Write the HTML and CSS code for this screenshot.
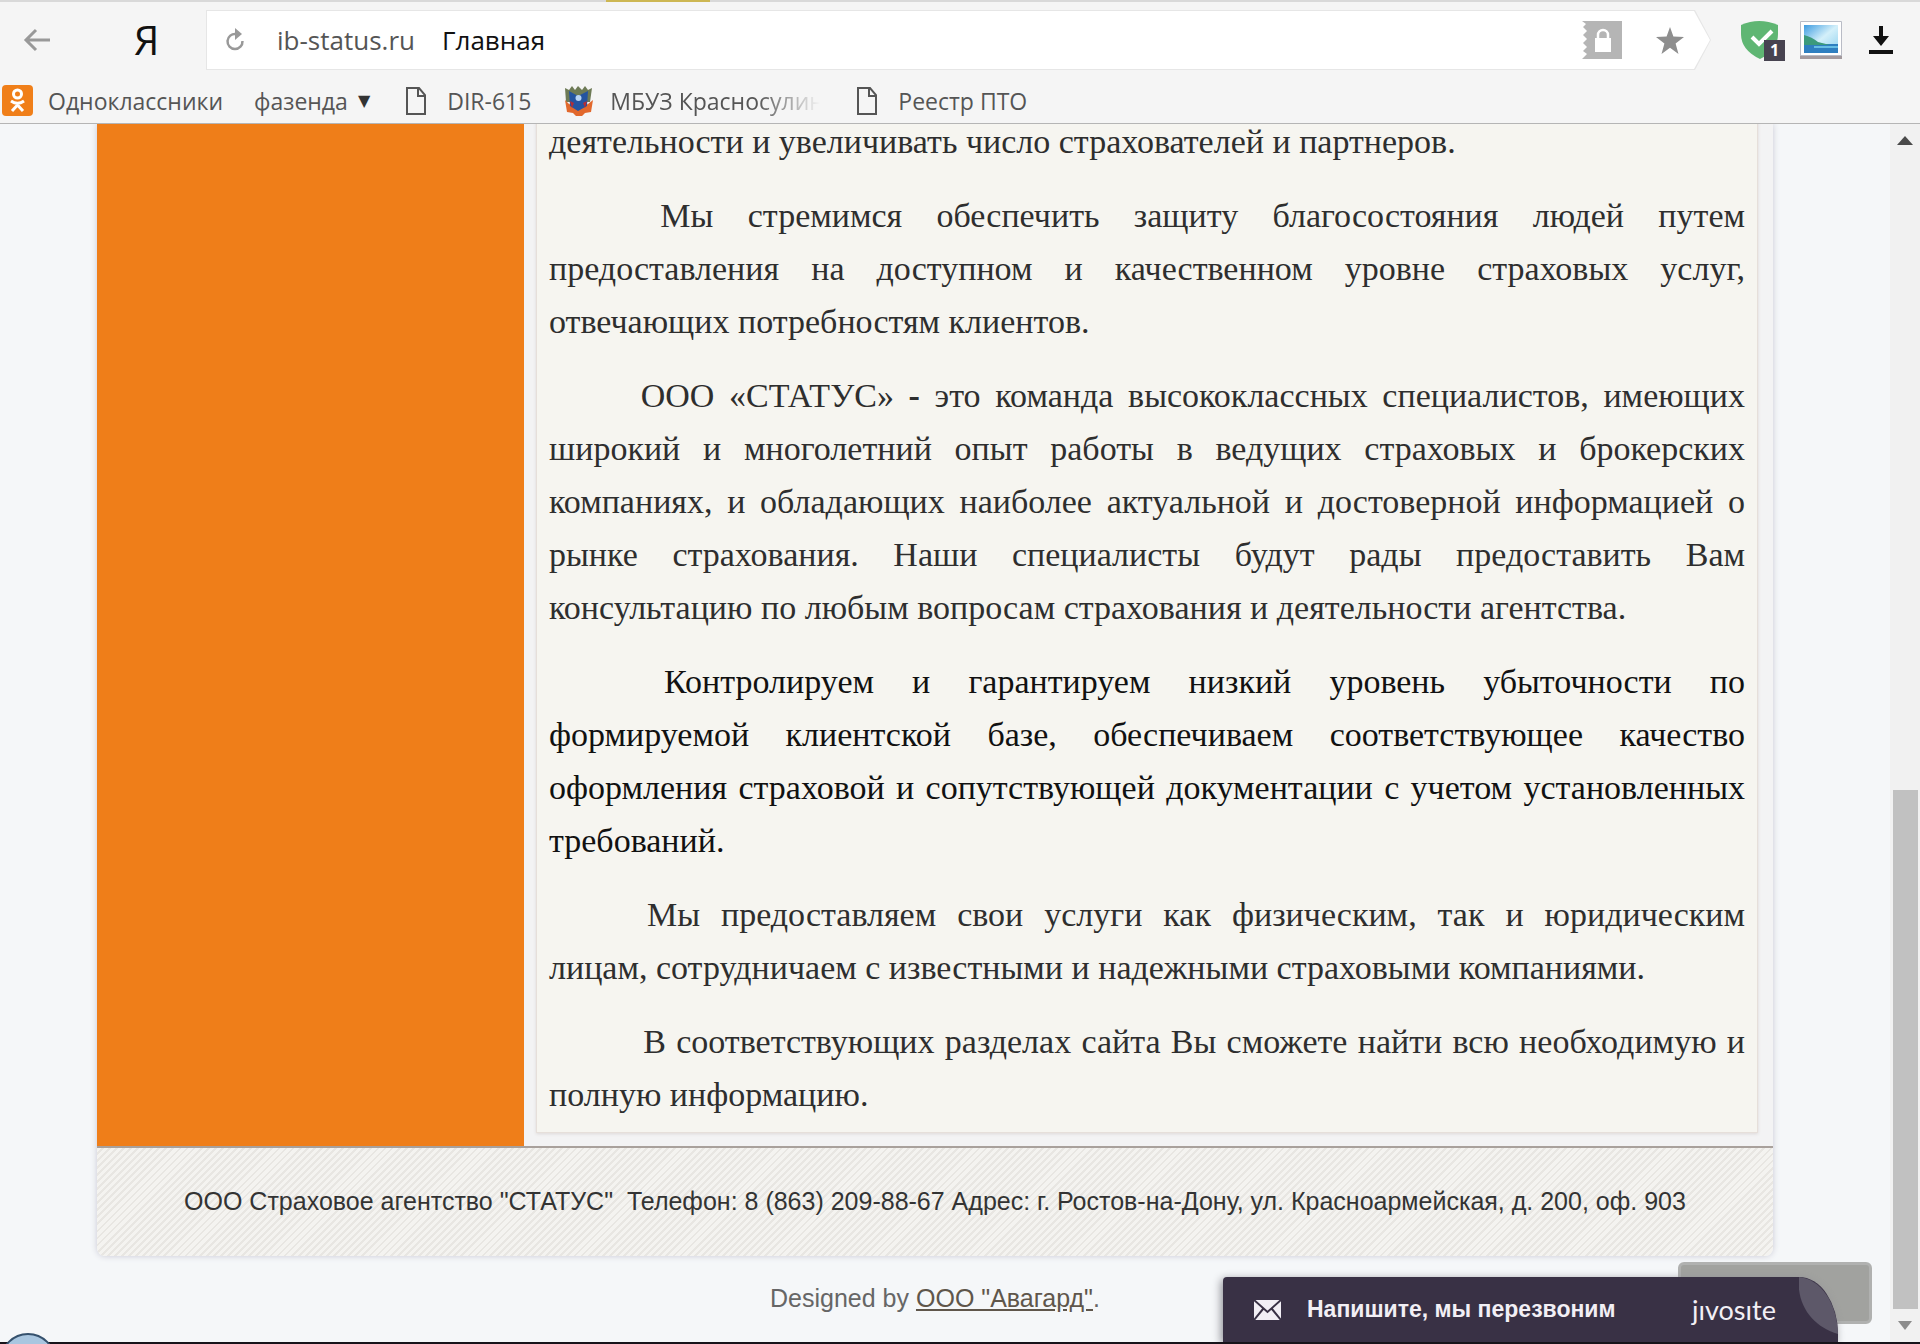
FILE: index.html
```html
<!DOCTYPE html>
<html lang="ru">
<head>
<meta charset="utf-8">
<title>Главная</title>
<link rel="stylesheet" href="styles.css">
</head>
<body>
<div class="browser">
  <header class="chrome">
    <div class="tabs"><span class="tab-active"></span></div>
    <div class="toolbar">
      <button class="tool back" aria-label="Назад">
        <svg width="28" height="24" viewBox="0 0 28 24" fill="none" stroke="#999" stroke-width="3"><path d="M27 12H3M13 2L3 12l10 10"/></svg>
      </button>
      <button class="tool yandex" aria-label="Яндекс">Я</button>
      <div class="address-edge">
        <form class="address">
          <button class="tool reload" type="button" aria-label="Обновить">
            <svg width="20" height="24" viewBox="0 0 20 24" fill="none" stroke="#999" stroke-width="2.5"><path d="M11 6A7.500 7.500 0 1 0 17.500 13"/><path d="M10 0l7 6-7 6z" fill="#999" stroke="none"/></svg>
          </button>
          <input class="url" type="text" value="ib-status.ru" aria-label="Адрес">
          <span class="page-title">Главная</span>
          <button class="tool lock" type="button" aria-label="Защита">
            <svg width="40" height="38" viewBox="0 0 40 38"><path fill="#b5b5b5" d="M0 0h40v38H0l5-5-4-3 4-4-4-4 4-4-4-4 4-4-4-4 3-3z"/><path fill="#fff" d="M13 17h16v14H13z"/><path fill="none" stroke="#fff" stroke-width="2.500" d="M16 18v-4a5 5 0 0 1 10 0v4"/></svg>
          </button>
          <button class="tool star" type="button" aria-label="В закладки">
            <svg width="28" height="27" viewBox="0 0 28 27"><path fill="#8e8e8e" d="M14 0l3.400 9.600L28 10l-8.400 6.400L22.500 27 14 20.800 5.500 27l2.900-10.600L0 10l10.600-.4z"/></svg>
          </button>
        </form>
      </div>
      <button class="tool shield" aria-label="Adguard">
        <svg width="38" height="39" viewBox="0 0 38 39"><path fill="#5fb673" d="M0 4Q18-4 37 4v9q0 16-18 25Q0 29 0 13z"/><path fill="none" stroke="#fff" stroke-width="4" d="M11 16l7 7L31 10"/></svg>
        <span class="badge">1</span>
      </button>
      <button class="tool picture" aria-label="Изображение">
        <svg width="42" height="38" viewBox="0 0 42 38">
          <defs><linearGradient id="sky" x1="0" y1="0" x2="1" y2="1"><stop offset="0" stop-color="#3d9be0"/><stop offset=".5" stop-color="#d4f0fa"/><stop offset="1" stop-color="#8fd0ee"/></linearGradient></defs>
          <path fill="#a39a9e" d="M0 33h42v5H0z"/><path fill="#fff" stroke="#b9bcc6" d="M.5.500h41v34H.5z"/><path fill="url(#sky)" d="M4 4h34v28H4z"/><path fill="#2f7fc0" d="M4 23h34v9H4z"/><path fill="#3c9a7c" d="M4 14q8 2 14 7l12 3H4z"/><path fill="#66bde4" d="M14 25h24v2H14z"/>
        </svg>
      </button>
      <button class="tool download" aria-label="Загрузки">
        <svg width="24" height="28" viewBox="0 0 24 28"><path d="M10 0h4v10h6l-8 10L4 10h6zM0 24h24v4H0z" fill="#111"/></svg>
      </button>
    </div>
    <nav class="bookmarks">
      <a class="bookmark bm-ok" href="#">
        <svg width="31" height="31" viewBox="0 0 31 31"><rect width="31" height="31" rx="4" fill="#f07f19"/><g fill="none" stroke="#fff" stroke-width="3"><circle cx="15.500" cy="9" r="4"/><path d="M9 16q6.500 4.500 13 0M10 26l5.500-6 5.500 6"/></g></svg>
        Одноклассники</a>
      <a class="bookmark bm-folder" href="#">фазенда <span class="caret">▼</span></a>
      <a class="bookmark bm-page" href="#">
        <svg width="20" height="28" viewBox="0 0 20 28" fill="none" stroke="#555" stroke-width="2"><path d="M1 1h12l6 7v19H1zM12 1v8h7"/></svg>
        DIR-615</a>
      <a class="bookmark bm-crest" href="#">
        <svg width="29" height="30" viewBox="0 0 29 30"><path fill="#6d7a55" d="M1 2l4 2 3-4 3 4 3-4 4 4 3-4 3 4 4-2-2 14H2z"/><path fill="#e2682c" d="M1 14l4 4 10 4 9-4 5-4-2 12-6 1-3 3h-6l-3-3-6-1z"/><path fill="#2454a0" d="M5 5l9 5 10-5-1 15-9 5-8-5z"/><circle cx="14.500" cy="12" r="3" fill="#b9d4f4"/><path fill="#b42d35" d="M6 15l4 2-2 5zM23 15l-4 2 2 5z"/></svg>
        <span class="fade">МБУЗ Красносулин</span></a>
      <a class="bookmark bm-page" href="#">
        <svg width="20" height="28" viewBox="0 0 20 28" fill="none" stroke="#555" stroke-width="2"><path d="M1 1h12l6 7v19H1zM12 1v8h7"/></svg>
        Реестр ПТО</a>
    </nav>
  </header>

  <div class="viewport">
    <div class="page">
      <div class="site">
        <div class="columns">
          <aside class="sidebar"></aside>
          <main class="content">
            <article class="article">
              <p class="continued">деятельности и увеличивать число страхователей и партнеров.</p>
              <p>&nbsp;Мы стремимся обеспечить защиту благосостояния людей путем предоставления на доступном и качественном уровне страховых услуг, отвечающих потребностям клиентов.</p>
              <p>&nbsp;ООО «СТАТУС» <b>-</b> это команда высококлассных специалистов, имеющих широкий и многолетний опыт работы в ведущих страховых и брокерских компаниях, и обладающих наиболее актуальной и достоверной информацией о рынке страхования. Наши специалисты будут рады предоставить Вам консультацию по любым вопросам страхования и деятельности агентства.</p>
              <p class="strong">&nbsp;Контролируем и гарантируем низкий уровень убыточности по формируемой клиентской базе, обеспечиваем соответствующее качество оформления страховой и сопутствующей документации с учетом установленных требований.</p>
              <p>&nbsp;Мы предоставляем свои услуги как физическим, так и юридическим лицам,&nbsp;сотрудничаем с известными и надежными страховыми компаниями.</p>
              <p class="closing">&nbsp;В соответствующих разделах сайта Вы сможете найти всю необходимую и полную информацию.</p>
            </article>
          </main>
        </div>
        <footer class="footer">ООО Страховое агентство "СТАТУС"&nbsp; Телефон: 8 (863) 209-88-67 Адрес: г. Ростов-на-Дону, ул. Красноармейская, д. 200, оф. 903</footer>
      </div>
      <p class="credit">Designed by <a href="#">ООО "Авагард"</a>.</p>
      <div class="to-top"></div>
      <button class="jivo">
        <svg width="27" height="20" viewBox="0 0 27 20"><path fill="#f2eff5" d="M0 0h27v20H0z"/><path fill="none" stroke="#393145" stroke-width="2" d="M0 0l13.500 12L27 0M0 20l9-11M27 20l-9-11"/></svg>
        <span class="jivo-label">Напишите, мы перезвоним</span>
        <span class="jivo-logo">jıvosıte</span>
        <svg class="jivo-leaf" width="39" height="57" viewBox="0 0 39 57"><path fill="#5d5869" d="M0 0C22 2 38 26 39 57C14 50-3 28 0 0z"/></svg>
      </button>
    </div>
    <div class="scrollbar">
      <svg class="up" width="16" height="9" viewBox="0 0 16 9"><path fill="#4a4a4a" d="M8 0l8 9H0z"/></svg>
      <div class="thumb"></div>
      <svg class="down" width="14" height="9" viewBox="0 0 14 9"><path fill="#8c8c8c" d="M0 0h14L7 9z"/></svg>
    </div>
  </div>
  <div class="taskbar"><span class="orb"></span></div>
</div>
</body>
</html>
```

FILE: styles.css
```css
* { box-sizing: border-box; }
body { margin: 0; font-family: "Liberation Sans", Arial, sans-serif; }
p { margin: 0; }
svg { display: block; flex: none; }
button { font: inherit; }

.browser { height: 100vh; display: flex; flex-direction: column; overflow: hidden; }

/* browser chrome */
.chrome { flex: none; height: 124px; background: #f5f5f5; border-bottom: 1px solid #b5b5b5; font-family: "Open Sans", "Noto Sans", sans-serif; }
.tabs { height: 2px; background: #d9d9d9; padding-left: 606px; }
.tab-active { display: block; width: 104px; height: 2px; background: #cdb753; }
.toolbar { height: 76px; display: flex; align-items: center; padding: 0 27px 0 23px; }
.tool { flex: none; display: block; padding: 0; border: 0; background: none; }
.yandex { width: 20px; margin: 0 52px 0 83px; font-family: "Open Sans", sans-serif; font-size: 40px; line-height: 56px; color: #111; }
.address-edge { flex: 1; height: 60px; padding: 1px; background: #e6e6e6; clip-path: polygon(0 0, calc(100% - 16px) 0, 100% 50%, calc(100% - 16px) 100%, 0 100%); }
.address { height: 58px; display: flex; align-items: center; background: #fff; padding: 0 26px 0 18px; clip-path: polygon(0 0, calc(100% - 16px) 0, 100% 50%, calc(100% - 16px) 100%, 0 100%); }
.url { width: 165px; margin-left: 32px; padding: 0; border: 0; outline: 0; background: none; font-family: inherit; font-size: 26px; color: #555; }
.page-title { flex: 1; font-size: 26px; color: #111; }
.star { margin-left: 34px; }
.shield { position: relative; margin-left: 30px; }
.badge { position: absolute; left: 23px; top: 19px; width: 21px; height: 21px; background: #474350; color: #fff; font: bold 16px/21px "Open Sans", sans-serif; text-align: center; }
.picture { margin-left: 21px; }
.download { margin-left: 27px; }
.bookmarks { display: flex; align-items: center; height: 45px; padding-left: 2px; }
.bookmark { display: flex; align-items: center; gap: 15px; color: #555; font-size: 23px; line-height: 32px; text-decoration: none; white-space: nowrap; margin-right: 33px; }
.bm-ok { margin-right: 31px; }
.bm-folder { gap: 10px; margin-right: 36px; }
.bm-page { gap: 21px; }
.bm-crest { gap: 17px; margin-right: 37px; }
.caret { font: 16px/32px "DejaVu Sans", sans-serif; color: #333; }
.fade { width: 210px; mask-image: linear-gradient(90deg, #000 70%, transparent); }

/* visible part of the site */
.viewport { flex: 1; min-height: 0; display: flex; }
.page { position: relative; flex: 1; padding: 0 117px 0 97px; background: #f5f7f9; overflow: hidden; }
.site { border-radius: 0 0 8px 8px; box-shadow: 0 0 6px #c9c9d4; }
.columns { display: flex; background: #f3f3f4; border-bottom: 2px solid #a9a19c; }
.sidebar { flex: none; width: 427px; background: #ef7e19; }
.content { flex: 1; padding: 0 15px 13px 12px; }
.article { padding: 0 12px 11px; background: #f6f5f0; border: 1px solid #e6dfda; border-top: 0; box-shadow: 0 1px 3px #ddd8d8; font-family: "Liberation Serif", "Times New Roman", serif; font-size: 34px; line-height: 53px; color: #2e2e2e; text-align: justify; }
.article p { text-indent: 77px; margin-bottom: 21px; }
.article .continued { text-indent: 0; margin-top: -9px; }
.article .closing { text-indent: 84px; margin-bottom: 0; }
.article .strong { color: #111; }
.footer { height: 108px; padding-top: 36px; border-radius: 0 0 8px 8px; text-align: center; font-size: 25px; line-height: 34px; color: #333; white-space: nowrap; background: repeating-linear-gradient(135deg, #f4f3f0 0 3px, #e8e6e2 3px 5px); }
.credit { padding-top: 25px; text-align: center; font-size: 25px; line-height: 34px; color: #666; }
.credit a { color: #5f564b; }

/* floating widgets */
.to-top { position: absolute; right: 18px; bottom: 18px; width: 194px; height: 62px; border: 3px solid #b0b1b0; border-radius: 6px; background: #a1a29f; }
.jivo { position: absolute; right: 52px; bottom: 0; width: 615px; height: 65px; display: flex; align-items: center; padding: 0 0 0 31px; border: 0; border-radius: 4px 39px 0 0 / 4px 57px 0 0; background: #393145; box-shadow: -2px 2px 8px #8f8f96; color: #f2eff5; text-align: left; }
.jivo-label { margin-left: 26px; width: 385px; font-size: 23px; font-weight: bold; white-space: nowrap; }
.jivo-logo { font-family: Lato, sans-serif; font-size: 27px; }
.jivo-leaf { position: absolute; right: 0; top: 0; }

.scrollbar { flex: none; width: 30px; display: flex; flex-direction: column; align-items: center; padding: 12px 0; background: #f1f1f1; }
.thumb { width: 25px; height: 519px; margin: auto 0 12px; background: #c1c1c1; }

.taskbar { position: relative; flex: none; height: 2px; background: #17131a; }
.orb { position: absolute; left: 0; bottom: -45px; width: 56px; height: 56px; border: 2px solid #35516d; border-radius: 50%; background: #a9c6e0; }
```
